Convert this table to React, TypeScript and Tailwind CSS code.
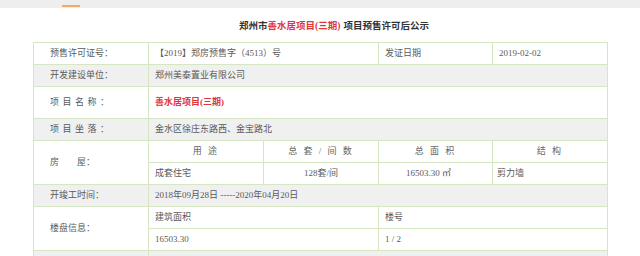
import React from "react";

const font = { fontFamily: '"Liberation Serif", "Noto Sans CJK SC", serif' };

function Cell({
  children,
  className = "",
}: {
  children?: React.ReactNode;
  className?: string;
}) {
  return (
    <div
      className={`flex items-center border-r border-b border-[#d4e6c2] text-[9px] leading-none text-[#5a5a5a] ${className}`}
    >
      {children}
    </div>
  );
}

export default function App() {
  const lab = "pl-[16px]";
  const val = "pl-[6px]";
  const head = "justify-center whitespace-pre text-[#666] tracking-[2px]";
  return (
    <div className="w-[640px] h-[256px] overflow-hidden bg-white" style={font}>
      {/* nav bar */}
      <div className="relative h-[8px] bg-[#eeeeee]">
        <div className="absolute left-[62px] top-[5px] h-[2px] w-[18px] bg-[#f5a66a]" />
      </div>
      {/* title */}
      <div className="h-[34px] flex items-center justify-center pl-[28px] text-[9.5px] font-bold text-[#333] pt-[3px]">
        <span>郑州市</span>
        <span className="text-[#e0363c]">善水居项目(三期)</span>
        <span className="pl-[3px]">项目预售许可后公示</span>
      </div>
      {/* table */}
      <div className="ml-[33px] w-[575px] border-t border-l border-[#d4e6c2] grid grid-cols-[115px_115px_115px_114px_115px] grid-rows-[22px_22px_32px_22px_22px_22px_22px_22px_22px_22px]">
        {/* row 1 */}
        <Cell className={lab}>预售许可证号：</Cell>
        <Cell className={`${val} col-span-2`}>【2019】郑房预售字（4513）号</Cell>
        <Cell className={val}>发证日期</Cell>
        <Cell className={val}>2019-02-02</Cell>
        {/* row 2 */}
        <Cell className={`${lab} bg-[#f0f0f0]`}>开发建设单位：</Cell>
        <Cell className={`${val} col-span-4 bg-[#f0f0f0]`}>郑州美泰置业有限公司</Cell>
        {/* row 3 */}
        <Cell className={`${lab} tracking-[3.5px]`}>项目名称：</Cell>
        <Cell className={`${val} col-span-4 text-[#e0363c] font-bold`}>善水居项目(三期)</Cell>
        {/* row 4 */}
        <Cell className={`${lab} bg-[#f0f0f0] tracking-[3.5px]`}>项目坐落：</Cell>
        <Cell className={`${val} col-span-4 bg-[#f0f0f0]`}>金水区徐庄东路西、金宝路北</Cell>
        {/* row 5 */}
        <Cell className={`${lab} row-span-2 whitespace-pre`}>房        屋：</Cell>
        <Cell className={head}>用 途</Cell>
        <Cell className={head}>总 套 / 间 数</Cell>
        <Cell className={head}>总 面 积</Cell>
        <Cell className={head}>结 构</Cell>
        <Cell className={val}>成套住宅</Cell>
        <Cell className="justify-center">128套/间</Cell>
        <Cell className="justify-center pr-[14px]">16503.30 ㎡</Cell>
        <Cell className="pl-[4px]">剪力墙</Cell>
        {/* row 6 */}
        <Cell className={`${lab} bg-[#f0f0f0]`}>开竣工时间：</Cell>
        <Cell className={`${val} col-span-4 bg-[#f0f0f0] whitespace-pre`}>2018年09月28日 -----2020年04月20日</Cell>
        {/* row 7 */}
        <Cell className={`${lab} row-span-2`}>楼盘信息：</Cell>
        <Cell className={`${val} col-span-2`}>建筑面积</Cell>
        <Cell className={`${val} col-span-2`}>楼号</Cell>
        <Cell className={`${val} col-span-2`}>16503.30</Cell>
        <Cell className={`${val} col-span-2 whitespace-pre`}>1 / 2</Cell>
        {/* row 8 */}
        <Cell className={`${lab} bg-[#f0f0f0]`}></Cell>
        <Cell className={`${val} col-span-4 bg-[#f0f0f0]`}></Cell>
      </div>
    </div>
  );
}
